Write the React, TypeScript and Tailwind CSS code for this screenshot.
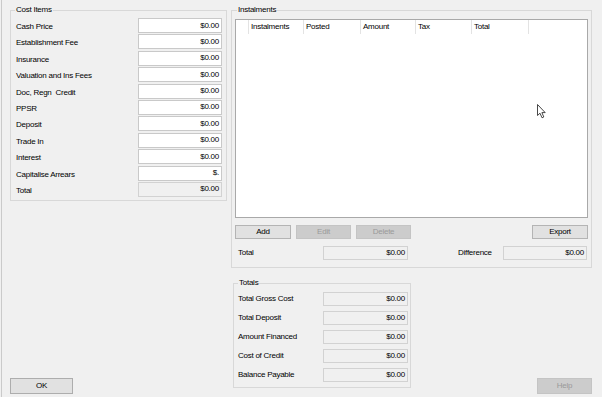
import React from "react";

const costItems: [string, string, boolean][] = [
  ["Cash Price", "$0.00", false],
  ["Establishment Fee", "$0.00", false],
  ["Insurance", "$0.00", false],
  ["Valuation and Ins Fees", "$0.00", false],
  ["Doc, Regn  Credit", "$0.00", false],
  ["PPSR", "$0.00", false],
  ["Deposit", "$0.00", false],
  ["Trade In", "$0.00", false],
  ["Interest", "$0.00", false],
  ["Capitalise Arrears", "$.", false],
  ["Total", "$0.00", true],
];

const totals = [
  "Total Gross Cost",
  "Total Deposit",
  "Amount Financed",
  "Cost of Credit",
  "Balance Payable",
];

function Box({ value, ro, w, h }: { value: string; ro?: boolean; w: string; h: string }) {
  return (
    <div
      className={`${w} ${h} flex items-center justify-end pr-[2px] border ${
        ro ? "bg-[#f0f0f0] border-[#d2d2d2]" : "bg-white border-[#c9c9c9]"
      }`}
    >
      {value}
    </div>
  );
}

function Btn({ label, disabled, w }: { label: string; disabled?: boolean; w: string }) {
  return (
    <div
      className={`${w} h-[14px] flex items-center justify-center border ${
        disabled
          ? "bg-[#cccccc] border-[#c4c4c4] text-[#9a9a9a]"
          : "bg-[#e1e1e1] border-[#b4b4b4] text-black"
      }`}
    >
      {label}
    </div>
  );
}

export default function App() {
  const cols = [
    { w: "w-[13px]", t: "" },
    { w: "w-[55px]", t: "Instalments" },
    { w: "w-[57px]", t: "Posted" },
    { w: "w-[55px]", t: "Amount" },
    { w: "w-[56px]", t: "Tax" },
    { w: "w-[57px]", t: "Total" },
  ];
  return (
    <div className="relative w-[602px] h-[397px] bg-[#f0f0f0] pl-[1px] text-[8px] leading-[10px] tracking-[-0.25px] text-black font-['Liberation_Sans',Arial,sans-serif] overflow-hidden">
      <div className="flex h-full border-l border-[#cacaca] pl-[8px] pb-[3px]">
        {/* Left column */}
        <div className="flex flex-col w-[217px]">
          <fieldset className="mt-[5px] h-[196px] border border-[#d8d8d8] pl-[5px] pr-[4px]">
            <legend className="ml-[-1px] px-[1px] leading-[10px]">Cost Items</legend>
            <div className="mt-[3px] flex flex-col">
              {costItems.map(([label, value, ro]) => (
                <div key={label} className="h-[16.4px] flex items-start justify-between">
                  <span className="mt-[4px] whitespace-pre">{label}</span>
                  <Box value={value} ro={ro} w="w-[84px]" h="h-[15px]" />
                </div>
              ))}
            </div>
          </fieldset>
          <div className="mt-auto w-[63px] h-[16px] flex items-center justify-center bg-[#e1e1e1] border border-[#adadad]">
            OK
          </div>
        </div>

        {/* Right column */}
        <div className="ml-[4px] flex flex-col w-[361px]">
          <fieldset className="mt-[5px] h-[263px] border border-[#d8d8d8] pl-[3px] pr-[3px]">
            <legend className="ml-[2px] px-[1px] leading-[10px]">Instalments</legend>
            <div className="mt-[4px] h-[199px] border border-[#a9a9a9] bg-white">
              <div className="flex h-[14px]">
                {cols.map((c, i) => (
                  <div
                    key={i}
                    className={`${c.w} h-full border-r border-[#e3e3e3] pl-[2px] flex items-center`}
                  >
                    {c.t}
                  </div>
                ))}
              </div>
            </div>
            <div className="mt-[7px] flex gap-[5px]">
              <Btn label="Add" w="w-[56px]" />
              <Btn label="Edit" w="w-[55px]" disabled />
              <Btn label="Delete" w="w-[55px]" disabled />
              <div className="ml-auto">
                <Btn label="Export" w="w-[56px]" />
              </div>
            </div>
            <div className="mt-[7px] flex items-center h-[14px]">
              <span className="ml-[3px] w-[85px]">Total</span>
              <Box value="$0.00" ro w="w-[85px]" h="h-[14px]" />
              <span className="ml-[50px] w-[45px]">Difference</span>
              <Box value="$0.00" ro w="w-[84px]" h="h-[14px]" />
            </div>
          </fieldset>

          <div className="flex flex-1 items-end">
            <fieldset className="self-start mt-[10px] ml-[2px] w-[178px] h-[110px] border border-[#d8d8d8] pl-[4px] pr-[2px]">
              <legend className="ml-[0px] px-[1px] leading-[10px]">Totals</legend>
              <div className="mt-[4px] flex flex-col gap-[5px]">
                {totals.map((t) => (
                  <div key={t} className="h-[14px] flex items-center justify-between">
                    <span>{t}</span>
                    <Box value="$0.00" ro w="w-[85px]" h="h-[14px]" />
                  </div>
                ))}
              </div>
            </fieldset>
            <div className="ml-auto w-[55px] h-[16px] flex items-center justify-center bg-[#cccccc] border border-[#c4c4c4] text-[#9a9a9a]">
              Help
            </div>
          </div>
        </div>
      </div>

      {/* mouse cursor */}
      <svg
        className="absolute left-[537px] top-[104px]"
        width="10"
        height="16"
        viewBox="0 0 10 16"
      >
        <path
          d="M0.5 0.5 L0.5 11.5 L3 9.2 L5 13.8 L6.8 13 L4.9 8.6 L8.2 8.6 Z"
          fill="white"
          stroke="#333"
          strokeWidth="0.9"
          strokeLinejoin="miter"
        />
      </svg>
    </div>
  );
}
